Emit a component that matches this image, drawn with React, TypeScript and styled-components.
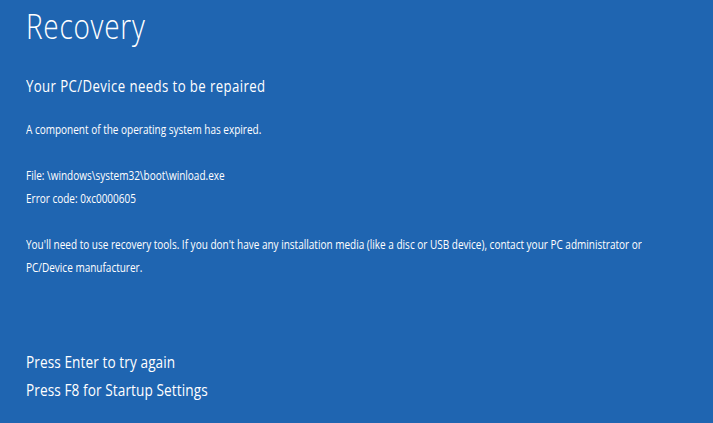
import React from "react";
import styled, { createGlobalStyle } from "styled-components";

const GlobalStyle = createGlobalStyle`
  html, body {
    margin: 0;
    padding: 0;
    height: 100%;
    background: #1f65b1;
  }
  #root {
    height: 100%;
  }
`;

const Screen = styled.div`
  width: 100%;
  height: 100vh;
  overflow: hidden;
  box-sizing: border-box;
  padding: 6px 0 0 26px;
  background: #1f65b1;
  color: #ffffff;
  font-family: "Open Sans", "Noto Sans", sans-serif;
`;

// the reference text is narrower than any installed face, so squeeze it
const Content = styled.div`
  display: flex;
  flex-direction: column;
  transform: scaleX(0.8);
  transform-origin: left top;
  white-space: nowrap;
`;

const Title = styled.h1`
  margin: 0;
  font-size: 35px;
  line-height: 40px;
  font-weight: 300;
  letter-spacing: 0.9px;
`;

const Heading = styled.h2`
  margin: 28px 0 0;
  font-size: 16.5px;
  line-height: 24px;
  font-weight: 400;
  letter-spacing: 0.5px;
`;

const Message = styled.div`
  margin-top: 19.6px;
  display: flex;
  flex-direction: column;
  gap: 23px;
`;

const Para = styled.p`
  margin: 0;
  font-size: 12.5px;
  line-height: 23px;
  font-weight: 400;
`;

const Options = styled.div`
  margin-top: 69px;
  display: flex;
  flex-direction: column;
`;

const Option = styled.div`
  font-size: 17px;
  line-height: 28.4px;
  font-weight: 400;
  letter-spacing: 0.12px;
`;

export default function App() {
  return (
    <>
      <GlobalStyle />
      <Screen>
        <Content>
          <Title>Recovery</Title>
          <Heading>Your PC/Device needs to be repaired</Heading>
          <Message>
            <Para>A component of the operating system has expired.</Para>
            <Para>
              File: \windows\system32\boot\winload.exe
              <br />
              Error code: 0xc0000605
            </Para>
            <Para>
              You'll need to use recovery tools. If you don't have any installation media (like a
              disc or USB device), contact your PC administrator or
              <br />
              PC/Device manufacturer.
            </Para>
          </Message>
          <Options>
            <Option>Press Enter to try again</Option>
            <Option>Press F8 for Startup Settings</Option>
          </Options>
        </Content>
      </Screen>
    </>
  );
}
